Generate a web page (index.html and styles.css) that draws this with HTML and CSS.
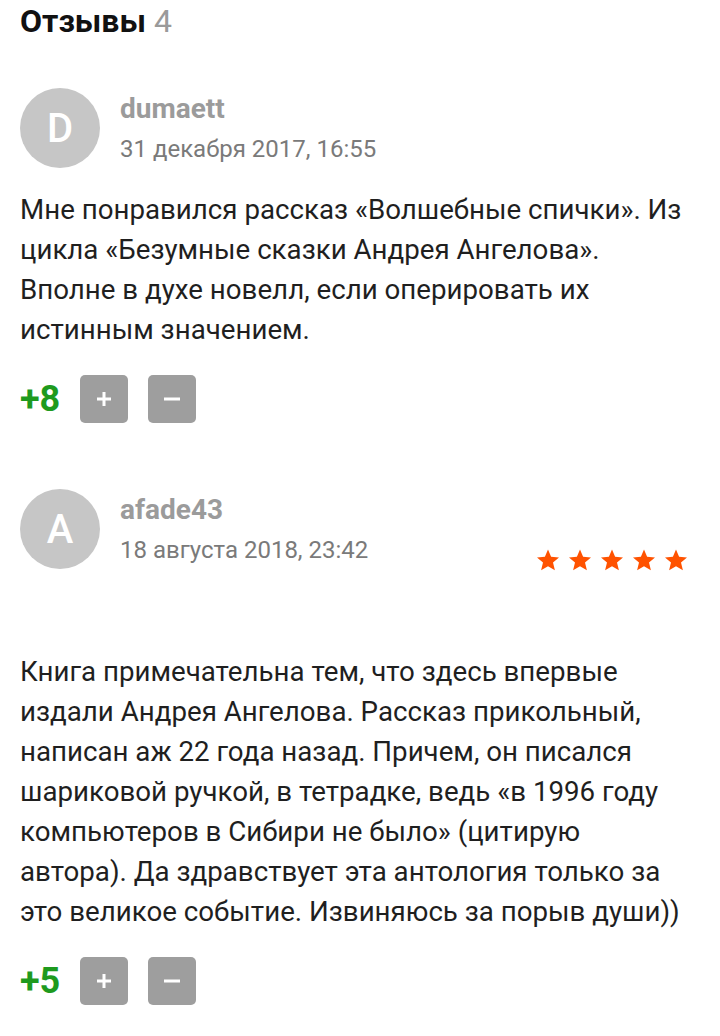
FILE: index.html
```html
<!DOCTYPE html>
<html lang="ru">
<head>
<meta charset="utf-8">
<title>Отзывы</title>
<link rel="stylesheet" href="styles.css">
</head>
<body>
<div class="page">
  <h2 class="title">Отзывы <span class="count">4</span></h2>

  <div class="review review-first">
    <div class="head">
      <div class="avatar">D</div>
      <div class="meta">
        <div class="name">dumaett</div>
        <div class="date">31 декабря 2017, 16:55</div>
      </div>
    </div>
    <p class="text">Мне понравился рассказ «Волшебные спички». Из цикла «Безумные сказки Андрея Ангелова». Вполне в духе новелл, если оперировать их истинным значением.</p>
    <div class="votes">
      <span class="score">+8</span>
      <button class="vote" aria-label="плюс"><svg viewBox="0 0 16 16" width="16" height="16"><rect x="6.5" y="1" width="3" height="14" fill="#fff"/><rect x="1" y="6.5" width="14" height="3" fill="#fff"/></svg></button>
      <button class="vote" aria-label="минус"><svg viewBox="0 0 16 16" width="16" height="16"><rect x="0" y="6.5" width="16" height="3" fill="#fff"/></svg></button>
    </div>
  </div>

  <div class="review review-second">
    <div class="head">
      <div class="avatar">A</div>
      <div class="meta">
        <div class="name">afade43</div>
        <div class="date">18 августа 2018, 23:42</div>
      </div>
      <div class="stars">
        <svg viewBox="0 0 24 24" width="24" height="24"><path d="M12 1.5l3.1 7.3 7.9.6-6 5.2 1.9 7.7L12 18.2l-6.9 4.1 1.9-7.7-6-5.2 7.9-.6z" fill="#ff5200"/></svg>
        <svg viewBox="0 0 24 24" width="24" height="24"><path d="M12 1.5l3.1 7.3 7.9.6-6 5.2 1.9 7.7L12 18.2l-6.9 4.1 1.9-7.7-6-5.2 7.9-.6z" fill="#ff5200"/></svg>
        <svg viewBox="0 0 24 24" width="24" height="24"><path d="M12 1.5l3.1 7.3 7.9.6-6 5.2 1.9 7.7L12 18.2l-6.9 4.1 1.9-7.7-6-5.2 7.9-.6z" fill="#ff5200"/></svg>
        <svg viewBox="0 0 24 24" width="24" height="24"><path d="M12 1.5l3.1 7.3 7.9.6-6 5.2 1.9 7.7L12 18.2l-6.9 4.1 1.9-7.7-6-5.2 7.9-.6z" fill="#ff5200"/></svg>
        <svg viewBox="0 0 24 24" width="24" height="24"><path d="M12 1.5l3.1 7.3 7.9.6-6 5.2 1.9 7.7L12 18.2l-6.9 4.1 1.9-7.7-6-5.2 7.9-.6z" fill="#ff5200"/></svg>
      </div>
    </div>
    <p class="text text-second">Книга примечательна тем, что здесь впервые издали Андрея Ангелова. Рассказ прикольный, написан аж 22 года назад. Причем, он писался шариковой ручкой, в тетрадке, ведь «в 1996 году компьютеров в Сибири не было» (цитирую автора). Да здравствует эта антология только за это великое событие. Извиняюсь за порыв души))</p>
    <div class="votes">
      <span class="score">+5</span>
      <button class="vote" aria-label="плюс"><svg viewBox="0 0 16 16" width="16" height="16"><rect x="6.5" y="1" width="3" height="14" fill="#fff"/><rect x="1" y="6.5" width="14" height="3" fill="#fff"/></svg></button>
      <button class="vote" aria-label="минус"><svg viewBox="0 0 16 16" width="16" height="16"><rect x="0" y="6.5" width="16" height="3" fill="#fff"/></svg></button>
    </div>
  </div>
</div>
</body>
</html>
```
FILE: styles.css
```css
html, body {
  margin: 0;
  padding: 0;
  background: #fff;
}
body {
  font-family: Roboto, "Liberation Sans", sans-serif;
  color: #1f1f1f;
}
.page {
  padding: 0 30px 0 20px;
}
.title {
  margin: 0;
  font-size: 32px;
  line-height: 42px;
  font-weight: 700;
  color: #111;
}
.count {
  font-weight: 400;
  color: #9a9a9a;
}
.review-first {
  margin-top: 46px;
}
.review-second {
  margin-top: 66px;
}
.head {
  display: flex;
  align-items: center;
  height: 80px;
}
.avatar {
  width: 80px;
  height: 80px;
  border-radius: 50%;
  background: #c6c6c6;
  color: #fff;
  font-size: 40px;
  font-weight: 500;
  display: flex;
  align-items: center;
  justify-content: center;
  flex-shrink: 0;
}
.meta {
  margin-left: 20px;
  flex: 1;
}
.name {
  font-size: 28px;
  font-weight: 700;
  color: #9b9b9b;
  line-height: 38px;
}
.date {
  font-size: 24px;
  color: #7a7a7a;
  line-height: 36px;
  margin-top: 3px;
}
.stars {
  display: flex;
  gap: 8px;
  align-self: flex-end;
  margin-bottom: -3px;
  margin-right: 2px;
}
.stars svg {
  display: block;
}
.text {
  margin: 22px 0 0;
  font-size: 27.7px;
  line-height: 40px;
  color: #1f1f1f;
}
.text-second {
  margin-top: 83px;
}
.votes {
  display: flex;
  align-items: center;
  gap: 20px;
  margin-top: 25px;
}
.score {
  font-size: 36px;
  font-weight: 700;
  color: #1e9a1e;
  min-width: 40px;
}
.vote {
  width: 48px;
  height: 48px;
  border: 0;
  border-radius: 5px;
  background: #9e9e9e;
  padding: 0;
  display: flex;
  align-items: center;
  justify-content: center;
}
.vote svg {
  display: block;
}
```
